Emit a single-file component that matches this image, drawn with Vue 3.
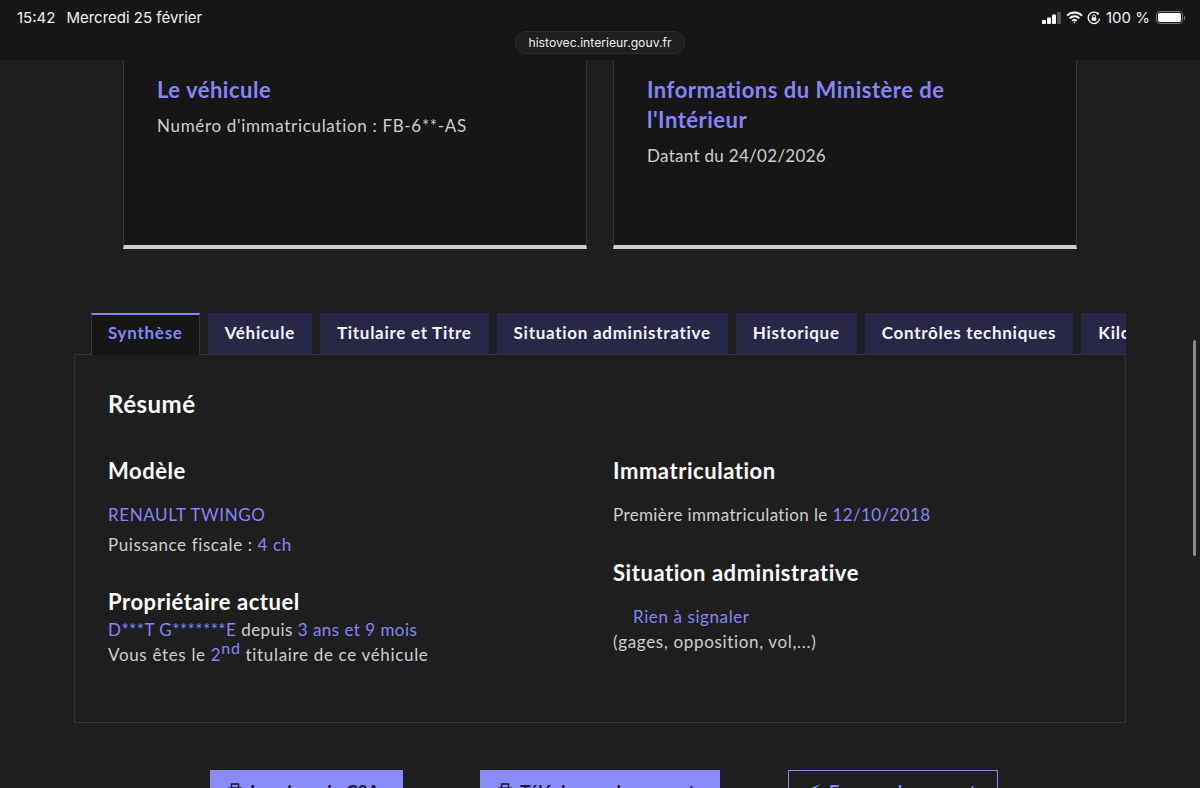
<script setup>
const tabs = [
  { label: 'Synthèse', active: true },
  { label: 'Véhicule' },
  { label: 'Titulaire et Titre' },
  { label: 'Situation administrative' },
  { label: 'Historique' },
  { label: 'Contrôles techniques' },
  { label: 'Kilométrage' }
]
</script>

<template>
  <div class="screen">
    <header class="statusbar">
      <div class="status-row">
        <div class="status-left"><span>15:42</span><span>Mercredi 25 février</span></div>
        <div class="status-right">
          <svg width="20" height="14" viewBox="0 0 20 14">
            <rect x="0" y="9" width="4" height="4" rx="1" fill="#fff" />
            <rect x="5" y="6.5" width="4" height="6.5" rx="1" fill="#fff" />
            <rect x="10" y="3.5" width="4" height="9.5" rx="1" fill="#fff" />
            <rect x="15" y="1" width="4" height="12" rx="1" fill="#555" />
          </svg>
          <svg width="17" height="13" viewBox="0 0 17 13" fill="none" stroke="#fff" stroke-width="1.9">
            <path d="M1 4.6a10.6 10.6 0 0 1 15 0" />
            <path d="M3.7 7.3a6.8 6.8 0 0 1 9.6 0" />
            <path d="M6.3 9.8a3.1 3.1 0 0 1 4.4 0" />
            <circle cx="8.5" cy="11.3" r="0.8" fill="#fff" stroke="none" />
          </svg>
          <svg width="14" height="14" viewBox="0 0 14 14" fill="none">
            <path d="M12.6 7.6A5.7 5.7 0 1 1 10.8 2.6" stroke="#fff" stroke-width="1.3" />
            <path d="M10.4 0.8l2.2 2.2-2.9 0.9z" fill="#fff" />
            <rect x="4.7" y="6.2" width="4.6" height="3.6" rx="0.6" fill="#fff" />
            <path d="M5.6 6.4V5.2a1.4 1.4 0 0 1 2.8 0v1.2" stroke="#fff" stroke-width="0.9" />
          </svg>
          <span class="percent">100 %</span>
          <div class="battery"><div class="battery-fill"></div></div>
          <div class="battery-tip"></div>
        </div>
      </div>
      <div class="url-row"><span class="url-pill">histovec.interieur.gouv.fr</span></div>
    </header>

    <main class="page">
      <section class="cards">
        <article class="card">
          <h2 class="card-title">Le véhicule</h2>
          <p class="card-text plate">Numéro d'immatriculation : FB-6**-AS</p>
        </article>
        <article class="card">
          <h2 class="card-title">Informations du Ministère de l'Intérieur</h2>
          <p class="card-text">Datant du 24/02/2026</p>
        </article>
      </section>

      <section class="tabs-block">
        <nav class="tabs">
          <button v-for="t in tabs" :key="t.label" class="tab" :class="{ active: t.active }">{{ t.label }}</button>
        </nav>
        <div class="panel">
          <h3 class="panel-title">Résumé</h3>
          <div class="columns">
            <div class="col">
              <h4 class="sub">Modèle</h4>
              <p class="line first blue">RENAULT TWINGO</p>
              <p class="line">Puissance fiscale : <span class="blue">4 ch</span></p>
              <h4 class="sub owner">Propriétaire actuel</h4>
              <p class="line tight owner-line"><span class="blue">D***T G*******E</span> depuis <span class="blue">3 ans et 9 mois</span></p>
              <p class="line tight wide">Vous êtes le <span class="blue">2<sup class="ordinal">nd</sup></span> titulaire de ce véhicule</p>
            </div>
            <div class="col">
              <h4 class="sub">Immatriculation</h4>
              <p class="line first snug">Première immatriculation le <span class="blue">12/10/2018</span></p>
              <h4 class="sub admin">Situation administrative</h4>
              <p class="line tight indent blue">Rien à signaler</p>
              <p class="line tight wide">(gages, opposition, vol,...)</p>
            </div>
          </div>
        </div>
      </section>

      <section class="actions">
        <a class="btn solid print">
          <svg width="14" height="14" viewBox="0 0 14 14" fill="none" stroke="#161640" stroke-width="1.4"><path d="M3.5 5V1h7v4M1 5h12v6H1z" /></svg>
          Imprimer le CSA
        </a>
        <a class="btn solid download">
          <svg width="14" height="14" viewBox="0 0 14 14" fill="none" stroke="#161640" stroke-width="1.4"><path d="M3.5 5V1h7v4M1 5h12v6H1z" /></svg>
          Télécharger le rapport
        </a>
        <a class="btn outline send">
          <svg width="14" height="14" viewBox="0 0 14 14"><path d="M14 1L0 6.5l4.5 1.5L14 1z" fill="#8585f6" /></svg>
          Envoyer le rapport
        </a>
      </section>
    </main>

    <div class="scrollbar"></div>
  </div>
</template>

<style>
html, body { margin: 0; background: #1e1e1e; }
</style>

<style scoped>
.screen {
  position: relative;
  width: 1200px;
  height: 788px;
  overflow: hidden;
  background: #1e1e1e;
  font-family: "Lato", "Noto Sans", sans-serif;
  color: #cecece;
}
.statusbar {
  height: 60px;
  box-sizing: border-box;
  background: #161616;
  padding: 9px 0 0;
  font-family: "Inter", "Liberation Sans", sans-serif;
}
.status-row {
  display: flex;
  justify-content: space-between;
  align-items: center;
  height: 17px;
  padding: 0 15px 0 17px;
  color: #f2f2f2;
  font-size: 15px;
}
.status-left { display: flex; gap: 11px; }
.status-right { display: flex; align-items: center; gap: 4px; }
.percent { margin: 0 2px 0 1px; }
.battery {
  box-sizing: content-box;
  width: 23px;
  height: 9px;
  border: 1.5px solid #777;
  border-radius: 4px;
  padding: 1px;
}
.battery-fill { width: 100%; height: 100%; background: #fff; border-radius: 2px; }
.battery-tip { width: 1px; height: 4px; margin-left: -3px; background: #777; border-radius: 0 1px 1px 0; }
.url-row { display: flex; justify-content: center; margin-top: 5px; }
.url-pill {
  height: 21px;
  line-height: 21px;
  padding: 0 12.5px;
  border-radius: 11px;
  background: #1f1f1f;
  border: 0.5px solid #2c2c2c;
  color: #eee;
  font-size: 12.2px;
}
.page { display: flex; flex-direction: column; }
.cards { display: flex; gap: 26px; padding: 0 123px; }
.card {
  width: 464px;
  height: 189px;
  box-sizing: border-box;
  background: #161616;
  border-left: 1px solid #353535;
  border-right: 1px solid #353535;
  border-bottom: 4px solid #cecece;
  padding: 15px 60px 0 33px;
}
.card-title {
  margin: 0 0 9px;
  font-size: 22px;
  font-weight: 700;
  line-height: 30px;
  color: #8585f6;
  letter-spacing: 0.5px;
}
.card-text { margin: 0; font-size: 17px; line-height: 24px; letter-spacing: 0.3px; }
.plate { letter-spacing: 0.68px; }
.tabs-block { margin: 64px 74px 0; width: 1052px; }
.tabs {
  display: flex;
  gap: 8px;
  padding-left: 17px;
  overflow: hidden;
  height: 42px;
  position: relative;
  z-index: 1;
  margin-bottom: -1px;
}
.tab {
  flex: none;
  height: 41px;
  border: 0;
  padding: 0 17px 2px;
  background: #272747;
  color: #f5f5fe;
  font: 700 17px/1 "Lato", "Noto Sans", sans-serif;
  letter-spacing: 0.72px;
}
.tab.active {
  height: 42px;
  background: #161616;
  color: #8585f6;
  border-top: 2px solid #8585f6;
  border-left: 1px solid #353535;
  border-right: 1px solid #353535;
  padding: 0 16px 5px;
}
.panel {
  height: 369px;
  box-sizing: border-box;
  border: 1px solid #353535;
  padding: 34px 33px 0;
}
.panel-title { margin: 0; font-size: 24px; line-height: 30px; font-weight: 700; color: #fff; letter-spacing: 0.5px; }
.columns { display: grid; grid-template-columns: 505px 1fr; margin-top: 38px; }
.sub { margin: 0; font-size: 22px; line-height: 28px; font-weight: 700; color: #fff; letter-spacing: 0.55px; }
.line { margin: 0; font-size: 17px; line-height: 30px; letter-spacing: 0.6px; }
.line.first { margin-top: 15px; }
.line.tight { line-height: 25px; }
.line.owner-line { letter-spacing: 0.47px; }
.line.wide { letter-spacing: 0.67px; }
.line.snug { letter-spacing: 0.38px; }
.blue { color: #8585f6; }
.ordinal { font-size: 16px; line-height: 0; vertical-align: 7px; }
.owner { margin-top: 28px; }
.admin { margin-top: 29px; }
.indent { padding-left: 20px; margin-top: 17px; }
.owner-line { margin-top: 1px; }
.actions { display: flex; margin: 47px 0 0 210px; }
.btn {
  display: flex;
  align-items: flex-start;
  gap: 8px;
  box-sizing: border-box;
  height: 48px;
  padding: 10px 0 0 18px;
  font-size: 18px;
  font-weight: 700;
  line-height: 24px;
}
.btn svg { margin-top: 3px; }
.solid { background: #8a8af8; color: #161640; }
.outline { border: 1px solid #8585f6; color: #8585f6; padding-top: 9px; }
.print { width: 193px; }
.download { width: 240px; margin-left: 77px; }
.send { width: 210px; margin-left: 68px; }
.scrollbar {
  position: absolute;
  left: 1193px;
  top: 340px;
  width: 3px;
  height: 216px;
  border-radius: 2px;
  background: #8a8a8a;
}
</style>
